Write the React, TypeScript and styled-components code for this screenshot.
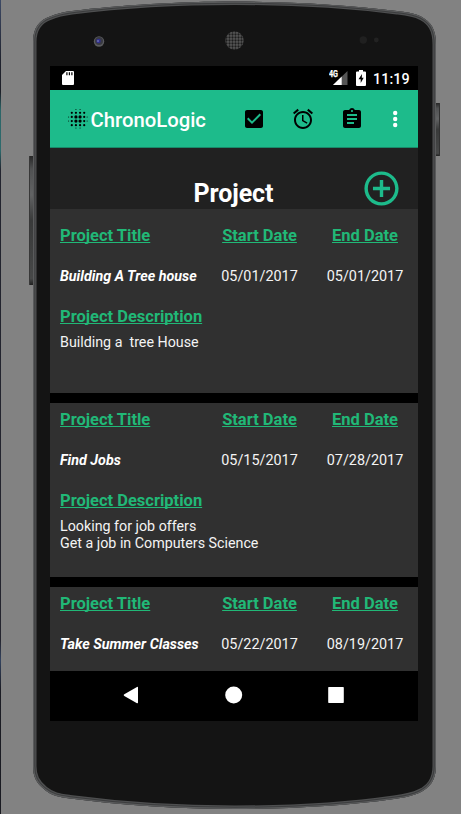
import React from "react";
import styled, { createGlobalStyle } from "styled-components";

const GlobalStyle = createGlobalStyle`
  * { box-sizing: border-box; }
  body { margin: 0; background: #828282; font-family: Roboto, sans-serif; overflow: hidden; }
`;

const Desktop = styled.main`
  position: relative;
  width: 461px;
  height: 814px;
  padding: 66px 43px 0 50px;
  background: #828282;
  overflow: hidden;
`;

const DesktopEdge = styled.div`
  position: absolute;
  left: 0;
  top: 0;
  width: 1px;
  height: 814px;
  background: linear-gradient(#3d4a66 0, #20232e 60px, #1d1f28 92px, #2c6668 110px, #2d6b6d 150px, #22242f 170px, #24242e 640px, #33435f 660px, #1b1c24 690px, #191a21 100%);
`;

const DeviceArt = styled.svg`
  position: absolute;
  left: 0;
  top: 0;
  width: 461px;
  height: 814px;
`;

const Screen = styled.section`
  position: relative;
  width: 368px;
  height: 655px;
  display: flex;
  flex-direction: column;
  background: #000;
  color: #fff;
`;

const StatusBar = styled.div`
  flex: none;
  height: 24px;
  display: flex;
  align-items: center;
  justify-content: space-between;
  padding: 0 8px 0 12px;
`;

const StatusGroup = styled.div`
  display: flex;
  align-items: center;
`;

const Clock = styled.span`
  width: 37px;
  margin-left: 7px;
  padding-top: 2px;
  font-size: 14.3px;
  font-weight: 500;
  line-height: 22px;
  letter-spacing: 0.1px;
  white-space: nowrap;
`;

const Icon = styled.svg<{ $w: number; $h?: number; $gap?: number }>`
  display: block;
  flex: none;
  width: ${(p) => p.$w}px;
  height: ${(p) => p.$h ?? p.$w}px;
  margin-left: ${(p) => p.$gap ?? 0}px;
`;

const Toolbar = styled.header`
  flex: none;
  height: 58px;
  display: flex;
  align-items: center;
  padding: 0 11px 0 18px;
  background: #1dbb8b;
  border-bottom: 1px solid #188a69;
`;

const AppName = styled.h1`
  flex: 1;
  margin: 2px 0 0 2.5px;
  font-size: 20.3px;
  font-weight: 500;
  line-height: 24px;
`;

const Actions = styled.nav`
  display: flex;
  align-items: center;
`;

const Heading = styled.div`
  flex: none;
  height: 61px;
  display: grid;
  grid-template-columns: 1fr auto 1fr;
  padding-right: 16px;
  background: #212121;
`;

const HeadingText = styled.h2`
  grid-column: 2;
  margin: 30px 0 0 15px;
  font-size: 25px;
  font-weight: 700;
  line-height: 31px;
  letter-spacing: -0.1px;
`;

const AddButton = styled.div`
  justify-self: end;
  margin-top: 20px;
`;

const List = styled.div`
  flex: 1;
  min-height: 0;
  overflow: hidden;
  display: flex;
  flex-direction: column;
  gap: 10px;
`;

const Card = styled.article<{ $first: boolean }>`
  flex: none;
  height: ${(p) => (p.$first ? 184 : 174)}px;
  padding: ${(p) => (p.$first ? 17 : 7)}px 0 0 10px;
  background: #303030;
`;

const Columns = styled.div`
  display: grid;
  grid-template-columns: 147px 105px 106px;
`;

const Label = styled.div<{ $center?: boolean }>`
  font-size: 16.5px;
  font-weight: 700;
  line-height: 20px;
  color: #21b877;
  text-decoration: underline;
  text-decoration-thickness: 1px;
  text-underline-offset: 1px;
  text-decoration-skip-ink: none;
  text-align: ${(p) => (p.$center ? "center" : "left")};
`;

const Title = styled.div`
  margin-top: 20px;
  font-size: 14.3px;
  font-weight: 700;
  font-style: italic;
  line-height: 20px;
  white-space: nowrap;
`;

const DateText = styled.div`
  margin-top: 21px;
  font-size: 14.4px;
  line-height: 20px;
  text-align: center;
  color: #f4f4f4;
`;

const Description = styled.div`
  margin-top: 20px;
`;

const Body = styled.p`
  margin: 7px 0 0;
  font-size: 14.28px;
  line-height: 17px;
  white-space: pre;
  color: #f4f4f4;
`;

const NavBar = styled.footer`
  flex: none;
  height: 50px;
  display: flex;
  justify-content: center;
  align-items: center;
  gap: 78px;
  padding-bottom: 2px;
`;

const projects = [
  { title: "Building A Tree house", start: "05/01/2017", end: "05/01/2017", text: "Building a  tree House" },
  { title: "Find Jobs", start: "05/15/2017", end: "07/28/2017", text: "Looking for job offers\nGet a job in Computers Science" },
  { title: "Take Summer Classes", start: "05/22/2017", end: "08/19/2017", text: "" },
];

const outline =
  "M33 42 C33 27 40 20 50 16.5 C57 13.5 64 12 72 11 C120 5 180 1.5 235 1.5 C290 1.5 350 5 397 11 C405 12 414 13 421 16.5 C431 22 436 29 436 45 V766 C436 781 429 788 420 792.5 C413 796 402 798 394 799 C345 806 285 809 235 809 C180 809 120 805 70 798.5 C60 797 52 796 45 790 C36 783 33 776 33 766 Z";

function Device() {
  return (
    <DeviceArt viewBox="0 0 461 814" aria-hidden="true">
      <defs>
        <linearGradient id="key" x1="0" y1="0" x2="0" y2="1">
          <stop offset="0" stopColor="#272727" />
          <stop offset=".1" stopColor="#505152" />
          <stop offset=".3" stopColor="#626364" />
          <stop offset=".5" stopColor="#393a3a" />
          <stop offset=".95" stopColor="#474848" />
          <stop offset="1" stopColor="#202020" />
        </linearGradient>
        <pattern id="mesh" width="3" height="3" patternUnits="userSpaceOnUse">
          <rect width="3" height="3" fill="#575757" />
          <circle cx="1.5" cy="1.5" r="1.15" fill="#1d1d1d" />
        </pattern>
        <clipPath id="shell">
          <path d={outline} />
        </clipPath>
      </defs>
      <rect x="29" y="156" width="5" height="129" fill="url(#key)" />
      <rect x="29" y="156" width="1" height="129" fill="#383838" />
      <rect x="435.5" y="103" width="4.5" height="53" fill="url(#key)" />
      <rect x="439" y="103" width="1" height="53" fill="#303030" />
      <g clipPath="url(#shell)">
        <path d={outline} fill="#141414" stroke="#4e4f50" strokeWidth="7" />
        <path d={outline} fill="none" stroke="#3c3d3e" strokeWidth="4.5" />
        <path d={outline} fill="none" stroke="#5a5b5c" strokeWidth="2.5" />
      </g>
      <circle cx="99" cy="41.5" r="5.2" fill="#5b5c5e" />
      <circle cx="99" cy="41" r="4" fill="#393a42" />
      <circle cx="98.5" cy="41" r="2.2" fill="#30308f" />
      <circle cx="98" cy="41" r=".8" fill="#9898c8" />
      <circle cx="234.5" cy="40.5" r="9.2" fill="url(#mesh)" />
      <circle cx="363.3" cy="40" r="3.7" fill="#202020" />
      <circle cx="376.3" cy="40" r="2.4" fill="#222" />
    </DeviceArt>
  );
}

function Logo() {
  const cols = [-10, -6.6, -2.2, 2.2, 6.6, 9.7];
  const radius = [0.5, 1.1, 1.6, 1.6, 1.1, 0.5];
  return (
    <Icon $w={20} viewBox="-10 -10 20 20">
      {cols.flatMap((x, i) =>
        cols.map((y, j) => {
          const onRim = i === 0 || i === 5 || j === 0 || j === 5;
          const corner = (i < 2 || i > 3) && (j < 2 || j > 3);
          if (onRim && corner) return null;
          return <circle key={`${x},${y}`} cx={x * 0.94} cy={y * 0.94} r={Math.min(radius[i], radius[j])} />;
        }),
      )}
    </Icon>
  );
}

export default function App() {
  return (
    <>
      <GlobalStyle />
      <Desktop>
        <DesktopEdge />
        <Device />
        <Screen>
          <StatusBar>
            <Icon $w={12} $h={14} viewBox="0 0 12 14" fill="#fff">
              <path d="M4 0h7q1 0 1 1v12q0 1-1 1H1q-1 0-1-1V4Z" />
              <path d="M4.900 1.200v3M7.400 1.200v3M9.900 1.200v3" stroke="#000" strokeWidth="1.200" />
            </Icon>
            <StatusGroup>
              <Icon $w={19} $h={16} viewBox="0 0 19 16">
                <path d="M18.500 1v14H4Z" fill="#555" />
                <path d="M12.700 6.600V15H4Z" fill="#fff" />
                <text x="0" y="7.300" fill="#fff" stroke="#fff" strokeWidth=".25" fontFamily="Roboto" fontSize="8.400" fontWeight="700" textLength="9" lengthAdjust="spacingAndGlyphs">4G</text>
              </Icon>
              <Icon $w={10} $h={16} $gap={8} viewBox="0 0 10 16">
                <path d="M3 0h4v1.500h2q1 0 1 1V15q0 1-1 1H1q-1 0-1-1V2.500q0-1 1-1h2Z" fill="#fff" />
                <path d="M6 4 2.500 9.200h2.200V13l3-5.200H5.800Z" fill="#000" />
              </Icon>
              <Clock>11:19</Clock>
            </StatusGroup>
          </StatusBar>
          <Toolbar>
            <Logo />
            <AppName>ChronoLogic</AppName>
            <Actions>
              <Icon $w={24} viewBox="0 0 24 24">
                <path d="M19 3H5c-1.110 0-2 .9-2 2v14c0 1.100.89 2 2 2h14c1.110 0 2-.9 2-2V5c0-1.100-.89-2-2-2zm-9 14l-5-5 1.410-1.410L10 14.170l7.590-7.590L19 8l-9 9z" />
              </Icon>
              <Icon $w={24} $gap={25} viewBox="0 0 24 24">
                <path d="M22 5.720l-4.600-3.860-1.290 1.530 4.600 3.860L22 5.720zM7.880 3.390L6.600 1.860 2 5.710l1.290 1.530 4.590-3.850zM12.500 8H11v6l4.750 2.850.75-1.230-4-2.370V8zM12 4c-4.970 0-9 4.030-9 9s4.020 9 9 9c4.970 0 9-4.030 9-9s-4.030-9-9-9zm0 16c-3.870 0-7-3.130-7-7s3.130-7 7-7 7 3.130 7 7-3.130 7-7 7z" />
              </Icon>
              <Icon $w={24} $gap={25} viewBox="0 0 24 24">
                <path d="M19 3h-4.180C14.400 1.840 13.300 1 12 1c-1.300 0-2.400.84-2.820 2H5c-1.100 0-2 .9-2 2v14c0 1.100.9 2 2 2h14c1.100 0 2-.9 2-2V5c0-1.100-.9-2-2-2zm-7 0c.55 0 1 .45 1 1s-.45 1-1 1-1-.45-1-1 .45-1 1-1zm2 14H7v-2h7v2zm3-4H7v-2h10v2zm0-4H7V7h10v2z" />
              </Icon>
              <Icon $w={24} $gap={19} viewBox="0 0 24 24" fill="#fff">
                <circle cx="12.200" cy="6" r="2.200" />
                <circle cx="12.200" cy="12" r="2.200" />
                <circle cx="12.200" cy="18" r="2.200" />
              </Icon>
            </Actions>
          </Toolbar>
          <Heading>
            <HeadingText>Project</HeadingText>
            <AddButton>
              <Icon $w={41} viewBox="0 0 24 24" fill="#1dbb8b">
                <path d="M13 7h-2v4H7v2h4v4h2v-4h4v-2h-4V7zm-1-5C6.480 2 2 6.480 2 12s4.480 10 10 10 10-4.480 10-10S17.520 2 12 2zm0 18c-4.410 0-8-3.590-8-8s3.590-8 8-8 8 3.590 8 8-3.590 8-8 8z" />
              </Icon>
            </AddButton>
          </Heading>
          <List>
            {projects.map((p, i) => (
              <Card key={p.title} $first={i === 0}>
                <Columns>
                  <Label>Project Title</Label>
                  <Label $center>Start Date</Label>
                  <Label $center>End Date</Label>
                  <Title>{p.title}</Title>
                  <DateText>{p.start}</DateText>
                  <DateText>{p.end}</DateText>
                </Columns>
                {p.text && (
                  <Description>
                    <Label>Project Description</Label>
                    <Body>{p.text}</Body>
                  </Description>
                )}
              </Card>
            ))}
          </List>
          <NavBar>
            <Icon $w={24} viewBox="0 0 24 24" fill="#fff">
              <path d="M4.300 11.300 17 4q1-.5 1 .6v15q0 1-1 .6L4.300 12.900q-1.400-.8 0-1.600Z" />
            </Icon>
            <Icon $w={24} viewBox="0 0 24 24" fill="#fff">
              <circle cx="11.700" cy="12" r="8.500" />
            </Icon>
            <Icon $w={24} viewBox="0 0 24 24" fill="#fff">
              <rect x="4.200" y="4" width="15.600" height="16" rx=".7" />
            </Icon>
          </NavBar>
        </Screen>
      </Desktop>
    </>
  );
}
